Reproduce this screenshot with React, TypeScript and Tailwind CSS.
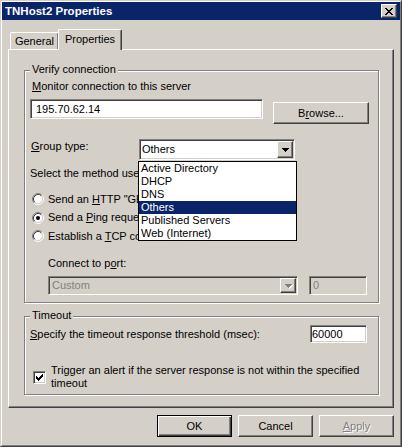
import React from "react";

const raised =
  "border border-t-white border-l-white border-r-[#404040] border-b-[#404040] shadow-[inset_-1px_-1px_0_#808080]";
const sunken =
  "border border-t-[#808080] border-l-[#808080] border-r-white border-b-white shadow-[inset_1px_1px_0_#404040,inset_-1px_-1px_0_#d4d0c8]";
const etched = "border border-[#808080] shadow-[1px_1px_0_#fff,inset_1px_1px_0_#fff]";

const CLOSE = [
  "XX....XX",
  ".XX..XX.",
  "..XXXX..",
  "...XX...",
  "..XXXX..",
  ".XX..XX.",
  "XX....XX",
];
const ARROW = ["XXXXXXX", ".XXXXX.", "..XXX..", "...X..."];
const CHECK = [
  "......X",
  ".....XX",
  "X...XXX",
  "XX.XXX.",
  "XXXXX..",
  ".XXX...",
  "..X....",
];

function Glyph({ rows, color = "#000", className }: { rows: string[]; color?: string; className?: string }) {
  const w = rows[0].length;
  const h = rows.length;
  return (
    <svg width={w} height={h} viewBox={`0 0 ${w} ${h}`} shapeRendering="crispEdges" className={className}>
      {rows.flatMap((r, y) =>
        r.split("").map((c, x) =>
          c === "X" ? <rect key={`${x}-${y}`} x={x} y={y} width={1} height={1} fill={color} /> : null
        )
      )}
    </svg>
  );
}

function Radio({ checked }: { checked?: boolean }) {
  return (
    <svg width={12} height={12} viewBox="0 0 12 12" className="shrink-0">
      <circle cx={6} cy={6} r={4.5} fill="#fff" />
      <path d="M2.11 9.89 A5.5 5.5 0 0 1 9.89 2.11" stroke="#808080" fill="none" />
      <path d="M9.89 2.11 A5.5 5.5 0 0 1 2.11 9.89" stroke="#fff" fill="none" />
      <path d="M2.82 9.18 A4.5 4.5 0 0 1 9.18 2.82" stroke="#404040" fill="none" />
      <path d="M9.18 2.82 A4.5 4.5 0 0 1 2.82 9.18" stroke="#d4d0c8" fill="none" />
      {checked && <circle cx={6} cy={6} r={2} fill="#000" />}
    </svg>
  );
}

function DropButton({ disabled }: { disabled?: boolean }) {
  return (
    <div className={`w-[16px] h-full bg-[#d4d0c8] ${raised} flex items-center justify-center`}>
      {disabled ? (
        <Glyph rows={ARROW} color="#808080" className="[filter:drop-shadow(1px_1px_0_#fff)]" />
      ) : (
        <Glyph rows={ARROW} />
      )}
    </div>
  );
}

const groups = ["Active Directory", "DHCP", "DNS", "Others", "Published Servers", "Web (Internet)"];

export default function App() {
  return (
    <div className="w-[402px] h-[447px] bg-[#d4d0c8] border border-t-[#d4d0c8] border-l-[#d4d0c8] border-r-[#404040] border-b-[#404040] font-['Liberation_Sans',Arial,sans-serif] text-[11px] leading-[13px] text-black select-none">
      <div className="h-full border border-t-white border-l-white border-r-[#808080] border-b-[#808080]">
        {/* title bar */}
        <div className="h-[18px] bg-[#0a246a] flex items-center justify-between pl-[3px] pr-[3px]">
          <span className="text-white font-bold text-[11.5px] leading-[18px]">TNHost2 Properties</span>
          <div className={`w-[16px] h-[14px] bg-[#d4d0c8] ${raised} flex items-center justify-center`}>
            <Glyph rows={CLOSE} />
          </div>
        </div>

        <div className="pt-[9px]">
          {/* tabs */}
          <div className="flex items-end h-[20px] pl-[8px]">
            <div className="w-[48px] h-[17px] border-t border-l border-white rounded-tl-[2px] shadow-[inset_-1px_0_0_#808080] pt-[2px] text-center">
              General
            </div>
            <div className="relative z-10 -mb-[1px] w-[64px] h-[21px] bg-[#d4d0c8] border-t border-l border-r border-t-white border-l-white border-r-[#404040] rounded-t-[2px] shadow-[inset_-1px_0_0_#808080] pt-[3px] text-center">
              Properties
            </div>
          </div>

          {/* panel */}
          <div className={`ml-[6px] w-[386px] h-[359px] ${raised} pt-[20px] pl-[15px]`}>
            <div className={`relative w-[355px] h-[233px] ${etched} pl-[5px] pt-[9px]`}>
              <span className="absolute left-[5px] -top-[8px] px-[2px] bg-[#d4d0c8]">Verify connection</span>
              <div className="ml-[2px]">
                <span className="underline">M</span>onitor connection to this server
              </div>
              <div className="flex items-start mt-[6px]">
                <div className={`w-[233px] h-[20px] bg-white ${sunken} pl-[5px] flex items-center`}>195.70.62.14</div>
                <div className={`ml-[10px] mt-[3px] w-[96px] h-[22px] ${raised} flex items-center justify-center`}>
                  B<span className="underline">r</span>owse...
                </div>
              </div>

              <div className="flex items-start mt-[15px]">
                <div className="w-[108px] ml-[1px] pt-[1px]">
                  <span className="underline">G</span>roup type:
                </div>
                <div className="relative">
                  <div className={`w-[156px] h-[21px] bg-white ${sunken} p-[1px] flex items-stretch justify-between`}>
                    <span className="pl-[1px] self-center">Others</span>
                    <DropButton />
                  </div>
                  <div className="absolute z-20 top-[22px] -left-[1px] w-[159px] border border-black bg-white">
                    {groups.map((g) => (
                      <div
                        key={g}
                        className={`h-[13px] pl-[2px] leading-[13px] ${g === "Others" ? "bg-[#0a246a] text-white" : ""}`}
                      >
                        {g}
                      </div>
                    ))}
                  </div>
                </div>
              </div>

              <div className="mt-[7px]">Select the method used to verify connection:</div>
              <div className="mt-[10px] ml-[2px] flex flex-col">
                <div className="h-[18px] flex items-center gap-[4px]">
                  <Radio />
                  <span>
                    Send an <span className="underline">H</span>TTP &quot;GET&quot; request
                  </span>
                </div>
                <div className="h-[19px] flex items-center gap-[4px]">
                  <Radio checked />
                  <span>
                    Send a <span className="underline">P</span>ing request
                  </span>
                </div>
                <div className="h-[18px] flex items-center gap-[4px]">
                  <Radio />
                  <span>
                    Establish a <span className="underline">T</span>CP connection
                  </span>
                </div>
              </div>

              <div className="mt-[12px] ml-[18px]">
                Connect to p<span className="underline">o</span>rt:
              </div>
              <div className="flex mt-[6px] ml-[18px]">
                <div className={`w-[250px] h-[19px] bg-[#d4d0c8] ${sunken} p-[1px] flex items-stretch justify-between`}>
                  <span className="pl-[2px] self-center text-[#808080]">Custom</span>
                  <DropButton disabled />
                </div>
                <div className={`ml-[11px] w-[58px] h-[19px] bg-[#d4d0c8] ${sunken} pl-[3px] flex items-center text-[#808080]`}>
                  0
                </div>
              </div>
            </div>

            <div className={`relative mt-[13px] w-[355px] h-[79px] ${etched} pl-[5px] pr-[11px] pt-[8px]`}>
              <span className="absolute left-[5px] -top-[8px] px-[2px] bg-[#d4d0c8]">Timeout</span>
              <div className="flex items-center justify-between">
                <span>
                  <span className="underline">S</span>pecify the timeout response threshold (msec):
                </span>
                <div className={`w-[57px] h-[18px] bg-white ${sunken} pl-[1px] flex items-center`}>60000</div>
              </div>
              <div className="flex items-start mt-[21px] ml-[3px]">
                <div className={`mt-[7px] w-[13px] h-[13px] shrink-0 bg-white ${sunken} flex items-center justify-center`}>
                  <Glyph rows={CHECK} />
                </div>
                <div className="ml-[5px] w-[315px]">
                  Trigger an alert if the server response is not within the specified timeout
                </div>
              </div>
            </div>
          </div>

          {/* buttons */}
          <div className="flex justify-end gap-[6px] pr-[6px] mt-[7px]">
            <div className="w-[75px] h-[22px] border border-black shadow-[inset_1px_1px_0_#fff,inset_-1px_-1px_0_#404040,inset_-2px_-2px_0_#808080] flex items-center justify-center">
              OK
            </div>
            <div className={`w-[75px] h-[22px] ${raised} flex items-center justify-center`}>Cancel</div>
            <div className={`w-[75px] h-[22px] ${raised} flex items-center justify-center text-[#808080] [text-shadow:1px_1px_0_#fff]`}>
              <span className="underline">A</span>pply
            </div>
          </div>
        </div>
      </div>
    </div>
  );
}
